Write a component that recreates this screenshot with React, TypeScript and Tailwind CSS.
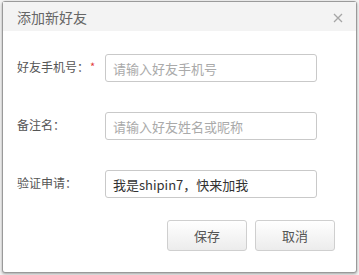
import React from 'react';

const font = { fontFamily: '"Microsoft YaHei", "Noto Sans CJK SC", "Noto Sans", sans-serif' };

const rows = [
  { label: '好友手机号：', required: true, placeholder: '请输入好友手机号', value: '' },
  { label: '备注名：', required: false, placeholder: '请输入好友姓名或昵称', value: '' },
  { label: '验证申请：', required: false, placeholder: '', value: '我是shipin7，快来加我' },
];

export default function App() {
  return (
    <div className="w-[359px] h-[275px] bg-[#f4f4f4] overflow-hidden pl-[2px] pt-[1px]" style={font}>
      <div className="w-[355px] h-[272px] border border-[#9a9a9a] rounded-[3px] bg-white shadow-[0_1px_3px_rgba(0,0,0,0.35)] flex flex-col">
        {/* Header */}
        <div className="h-[29px] bg-[#f3f3f3] flex items-center justify-between pl-[14px] pr-[13px]">
          <span className="text-[14px] text-[#666] leading-none">添加新好友</span>
          <svg width="10" height="10" viewBox="0 0 10 10" className="mt-[2px]">
            <path d="M1 1 L9 9 M9 1 L1 9" stroke="#a6a6a6" strokeWidth="1.3" />
          </svg>
        </div>

        {/* Form */}
        <div className="flex flex-col gap-[30px] pt-[23px] pl-[14px]">
          {rows.map((row) => (
            <div key={row.label} className="flex items-center h-[28px]">
              <div className="w-[88px] text-[12px] text-[#555] flex items-center -mt-[3px]">
                {row.label}
                {row.required && <span className="text-[#e23b3b] text-[11px] ml-[1px]">*</span>}
              </div>
              <input
                readOnly
                placeholder={row.placeholder}
                defaultValue={row.value}
                className="w-[212px] h-[28px] border border-[#c9c9c9] rounded-[3px] px-[7px] text-[13px] text-[#333] placeholder:text-[#aaa] outline-none"
                style={font}
              />
            </div>
          ))}
        </div>

        {/* Buttons */}
        <div className="flex justify-end gap-[8px] mt-[22px] pr-[21px]">
          <button className="w-[80px] h-[31px] border border-[#cfcfcf] rounded-[3px] bg-gradient-to-b from-[#ffffff] to-[#ececec] text-[13px] text-[#555]">
            保存
          </button>
          <button className="w-[80px] h-[31px] border border-[#cfcfcf] rounded-[3px] bg-gradient-to-b from-[#ffffff] to-[#ececec] text-[13px] text-[#555]">
            取消
          </button>
        </div>
      </div>
    </div>
  );
}
